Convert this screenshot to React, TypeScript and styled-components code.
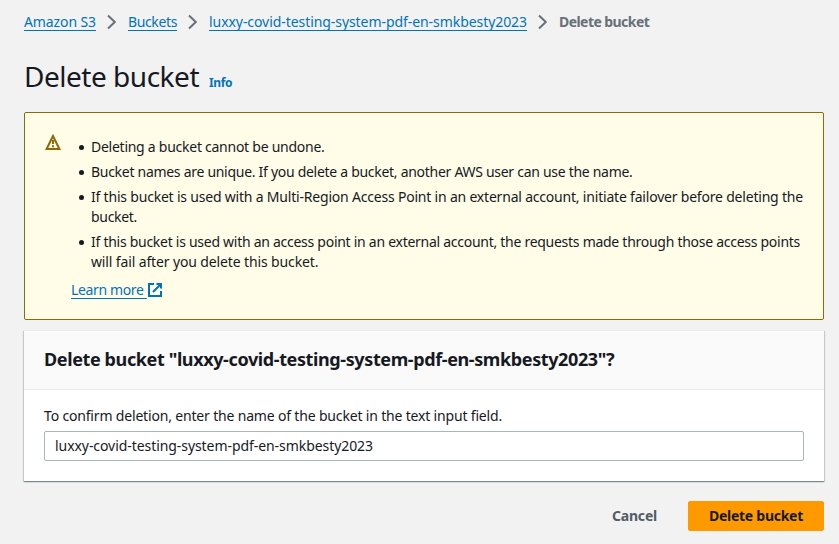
import React from 'react';
import styled, { createGlobalStyle } from 'styled-components';

const GlobalStyle = createGlobalStyle`
  *, *::before, *::after { box-sizing: border-box; }
  body {
    margin: 0;
    background: #f2f2f2;
    color: #16191f;
    font: 400 14px/20px "Noto Sans", "Open Sans", sans-serif;
    overflow: hidden;
  }
`;

const Page = styled.main`
  display: flex;
  flex-direction: column;
  width: 839px;
  height: 544px;
  padding: 12px 15px 0 24px;
`;

/* letter-spacing tuned per run of text */
const Text = styled.span<{ $track?: number }>`
  letter-spacing: ${({ $track = 0 }) => $track}px;
  white-space: nowrap;
`;

const Breadcrumbs = styled.nav`
  display: flex;
  align-items: center;
  height: 20px;
`;

const Link = styled.a`
  color: #0073bb;
  text-decoration: underline;
  text-decoration-thickness: 1px;
  text-underline-offset: 3px;
  text-decoration-skip-ink: none;
`;

const Crumb = styled(Link)<{ $width: number }>`
  width: ${({ $width }) => $width}px;
  white-space: nowrap;
`;

const CurrentCrumb = styled.span`
  color: #687078;
  font-weight: 700;
`;

const Separator = styled.svg`
  flex: none;
  width: 10px;
  height: 16px;
  margin: 0 11px;
`;

const TitleRow = styled.header`
  display: flex;
  align-items: baseline;
  height: 36px;
  margin-top: 26px;
`;

const Title = styled.h1`
  width: 185px;
  margin: 0;
  font-size: 28px;
  font-weight: 400;
  line-height: 36px;
`;

const InfoLink = styled.a`
  color: #0073bb;
  font-size: 12px;
  font-weight: 700;
`;

const Warning = styled.section`
  display: flex;
  height: 208px;
  margin-top: 18px;
  padding: 21px 19px 0 20px;
  border: 1px solid #906806;
  border-radius: 2px;
  background: #fffde8;
`;

const WarningIcon = styled.svg`
  flex: none;
  width: 16px;
  height: 16px;
  margin-right: 10px;
`;

const WarningBody = styled.div`
  flex: 1;
  padding-top: 3px;
`;

const List = styled.ul`
  display: flex;
  flex-direction: column;
  gap: 5px;
  margin: 0 0 8px;
  padding: 0;
  list-style: none;
`;

const Item = styled.li`
  display: grid;
  grid-template-columns: 20px 1fr;

  &::before {
    content: "";
    grid-row: 1 / span 2;
    width: 5px;
    height: 5px;
    margin: 8px 0 0 8px;
    border-radius: 50%;
    background: #16191f;
  }

  & > span { grid-column: 2; }
`;

const LearnMore = styled.div`
  display: flex;
  align-items: center;
  height: 20px;
`;

const LearnMoreLink = styled(Link)`
  width: 76px;

  & > span { white-space: pre; }
`;

const ExternalIcon = styled.svg`
  width: 16px;
  height: 16px;
`;

const Card = styled.section`
  height: 151px;
  margin-top: 10px;
  border-top: 1px solid #eaeded;
  background: #fff;
  box-shadow:
    0 1px 1px 0 rgba(0, 28, 36, 0.3),
    1px 1px 1px 0 rgba(0, 28, 36, 0.15),
    -1px 1px 1px 0 rgba(0, 28, 36, 0.15);
`;

const CardHeader = styled.div`
  display: flex;
  align-items: center;
  height: 59px;
  padding: 0 20px 2px;
  border-bottom: 1px solid #eaeded;
  background: #fafafa;
`;

const CardTitle = styled.h2`
  margin: 0;
  font-size: 18px;
  font-weight: 700;
  line-height: 22px;
`;

const CardBody = styled.div`
  display: flex;
  flex-direction: column;
  gap: 5px;
  padding: 16px 20px 20px;
`;

const Input = styled.input`
  width: 100%;
  height: 30px;
  padding: 0 10px 1px;
  border: 1px solid #aab7b8;
  border-radius: 2px;
  background: #fff;
  color: #16191f;
  font: inherit;
  letter-spacing: -0.065px;
  outline: none;
`;

const Actions = styled.footer`
  display: flex;
  justify-content: flex-end;
  gap: 10px;
  margin-top: 20px;
`;

const Button = styled.button<{ $primary?: boolean }>`
  height: 30px;
  padding: 0 20px;
  border: 1px solid ${({ $primary }) => ($primary ? '#ff9900' : 'transparent')};
  border-radius: 2px;
  background: ${({ $primary }) => ($primary ? '#ff9900' : 'transparent')};
  color: ${({ $primary }) => ($primary ? '#16191f' : '#545b64')};
  font: inherit;
  font-weight: 700;
`;

const BUCKET = 'luxxy-covid-testing-system-pdf-en-smkbesty2023';

const notices: { text: string; track: number }[][] = [
  [{ text: 'Deleting a bucket cannot be undone.', track: -0.26 }],
  [{ text: 'Bucket names are unique. If you delete a bucket, another AWS user can use the name.', track: -0.287 }],
  [
    {
      text: 'If this bucket is used with a Multi-Region Access Point in an external account, initiate failover before deleting the',
      track: -0.2,
    },
    { text: 'bucket.', track: -0.3 },
  ],
  [
    {
      text: 'If this bucket is used with an access point in an external account, the requests made through those access points',
      track: -0.273,
    },
    { text: 'will fail after you delete this bucket.', track: -0.13 },
  ],
];

const Chevron = () => (
  <Separator viewBox="0 0 10 16" fill="none" stroke="#687078" strokeWidth="2">
    <path d="M1 1.5 7.8 8 1 14.5" />
  </Separator>
);

export default function App() {
  return (
    <>
      <GlobalStyle />
      <Page>
        <Breadcrumbs>
          <Crumb $width={72}><Text $track={-0.103}>Amazon S3</Text></Crumb>
          <Chevron />
          <Crumb $width={49}><Text $track={-0.372}>Buckets</Text></Crumb>
          <Chevron />
          <Crumb $width={318}><Text $track={-0.065}>{BUCKET}</Text></Crumb>
          <Chevron />
          <CurrentCrumb><Text $track={-0.56}>Delete bucket</Text></CurrentCrumb>
        </Breadcrumbs>

        <TitleRow>
          <Title><Text $track={-0.48}>Delete bucket</Text></Title>
          <InfoLink><Text $track={-0.4}>Info</Text></InfoLink>
        </TitleRow>

        <Warning>
          <WarningIcon viewBox="0 0 16 16" fill="none" stroke="#906806" strokeWidth="2">
            <path d="M8 2 1.6 15h12.8z" />
            <path d="M8 6v4M8 11.2v2" />
          </WarningIcon>
          <WarningBody>
            <List>
              {notices.map((lines) => (
                <Item key={lines[0].text}>
                  {lines.map((line) => (
                    <Text key={line.text} $track={line.track}>{line.text}</Text>
                  ))}
                </Item>
              ))}
            </List>
            <LearnMore>
              <LearnMoreLink><Text $track={-0.362}>{'Learn more '}</Text></LearnMoreLink>
              <ExternalIcon viewBox="0 0 16 16" fill="none" stroke="#0073bb" strokeWidth="2">
                <path d="M7 2H2v12h12V9" />
                <path d="M9.5 2H14v4.5M14 2 6 10" />
              </ExternalIcon>
            </LearnMore>
          </WarningBody>
        </Warning>

        <Card>
          <CardHeader>
            <CardTitle><Text $track={-0.385}>{`Delete bucket "${BUCKET}"?`}</Text></CardTitle>
          </CardHeader>
          <CardBody>
            <Text as="label" htmlFor="bucket-name" $track={-0.173}>
              To confirm deletion, enter the name of the bucket in the text input field.
            </Text>
            <Input id="bucket-name" defaultValue={BUCKET} />
          </CardBody>
        </Card>

        <Actions>
          <Button><Text $track={-0.205}>Cancel</Text></Button>
          <Button $primary><Text $track={-0.27}>Delete bucket</Text></Button>
        </Actions>
      </Page>
    </>
  );
}
